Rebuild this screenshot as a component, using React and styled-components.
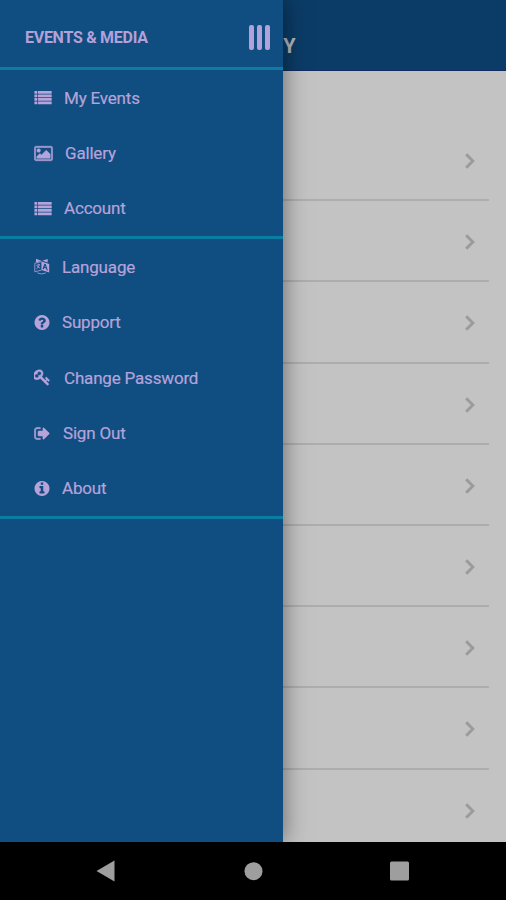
import React from "react";
import styled, { createGlobalStyle } from "styled-components";

const GlobalStyle = createGlobalStyle`
  * {
    box-sizing: border-box;
  }
  body {
    margin: 0;
    font-family: Roboto, "Liberation Sans", sans-serif;
  }
`;

const Screen = styled.div`
  display: flex;
  position: relative;
  flex-direction: column;
  width: 506px;
  height: 900px;
  overflow: hidden;
  background: #000;
`;

const Page = styled.div`
  display: flex;
  flex-direction: column;
  height: 842px;
  overflow: hidden;
  background: #c3c3c3;
`;

const PageHeader = styled.div`
  display: flex;
  flex: none;
  justify-content: center;
  align-items: flex-end;
  height: 71px;
  padding-bottom: 12px;
  background: #0b3c67;
  border-bottom: 1px solid #142c5b;
`;

const PageTitle = styled.div`
  color: #b5b8bd;
  font-size: 20px;
  font-weight: 700;
  line-height: 24px;
  letter-spacing: 0.1px;
`;

const PageList = styled.div`
  padding: 49px 17px 0 0;
`;

const PageRow = styled.div`
  display: flex;
  justify-content: flex-end;
  align-items: center;
  height: 81.2px;
  padding: 3px 13px 0 0;
  border-bottom: 2px solid #adadad;
`;

const Drawer = styled.div`
  position: absolute;
  top: 0;
  left: 0;
  width: 283px;
  height: 842px;
  background: #104d80;
  box-shadow: 0 0 22px rgba(0, 0, 0, 0.5);
  clip-path: inset(0 -40px 0 0);
`;

const DrawerHeader = styled.div`
  display: flex;
  justify-content: space-between;
  align-items: center;
  height: 70px;
  padding: 7px 13px 0 25px;
  border-bottom: 3px solid #0b7da2;
`;

const DrawerTitle = styled.div`
  color: #b3a1d8;
  font-size: 16px;
  font-weight: 700;
  letter-spacing: -0.28px;
  white-space: nowrap;
`;

const MenuButton = styled.div`
  display: flex;
  gap: 3px;
`;

const MenuBar = styled.div`
  width: 5px;
  height: 25px;
  border-radius: 2px;
  background: #b3a1da;
`;

const MenuSection = styled.div`
  border-bottom: 3px solid #0b7da2;
`;

const MenuItem = styled.div`
  display: flex;
  align-items: center;
  height: 55.4px;
  padding-left: 34px;
  color: #b5a3da;
`;

const MenuIcon = styled.svg`
  display: block;
  flex: none;
  width: ${(props) => props.$width}px;
  height: ${(props) => props.$height || 17}px;
  fill: currentColor;
`;

const MenuText = styled.div`
  margin-left: ${(props) => props.$gap}px;
  font-size: 17px;
  line-height: 20px;
  letter-spacing: -0.18px;
  white-space: nowrap;
  -webkit-text-stroke: 0.2px currentColor;
`;

const NavBar = styled.div`
  display: flex;
  justify-content: space-between;
  align-items: center;
  height: 58px;
  padding: 0 96px;
`;

const CIRCLE =
  "M1664 896q0 209-103 385.5t-279.5 279.5-385.5 103-385.5-103-279.5-279.5-103-385.5 103-385.5 279.5-279.5 385.5-103 385.5 103 279.5 279.5 103 385.5z";

const icons = {
  list: {
    width: 18,
    box: "0 0 18 17",
    shape: [1.9, 5.4, 8.9, 12.4].map((y) => (
      <g key={y}>
        <rect x="0.4" y={y} width="2.9" height="2.9" rx="0.4" />
        <rect x="4" y={y} width="13.7" height="2.9" rx="0.4" />
      </g>
    ))
  },
  picture: {
    width: 19,
    box: "0 0 1920 1792",
    shape: (
      <path
        stroke="currentColor"
        strokeWidth="50"
        d="M640 576q0 80-56 136t-136 56-136-56-56-136 56-136 136-56 136 56 56 136zm1024 384v448h-1408v-192l320-320 160 160 512-512zm96-704h-1600q-13 0-22.5 9.5t-9.5 22.5v1216q0 13 9.5 22.5t22.5 9.5h1600q13 0 22.5-9.5t9.5-22.5v-1216q0-13-9.5-22.5t-22.5-9.5zm160 32v1216q0 66-47 113t-113 47h-1600q-66 0-113-47t-47-113v-1216q0-66 47-113t113-47h1600q66 0 113 47t47 113z"
      />
    )
  },
  language: {
    width: 16,
    box: "0 0 16 17",
    shape: (
      <>
        <path
          fillRule="evenodd"
          d="M7.4 3.6 15.2 6V14.6L7.4 12.1zM10.4 5.7 8.5 10.9l1.3.4.5-1.3 1.9.6.4 1.6 1.3.4-2.1-6.4zm.6 1.9.7 1.9-1.2-.4z"
        />
        <path d="M2.1.8 7.7 3.1 1.8 4.6zM8.2 2.8 13.7 1v3.4z" />
        <path
          d="M7.4 3.6.8 5.3V13.8L7.4 12.1M2.4 7.4 6 6.5M4.1 5.7v1.1M5.4 6.8Q4.8 9.3 2.4 11M3.2 8Q4 9.6 6.1 10.1M3.3 14.9Q7.5 17 11.8 14.9"
          fill="none"
          stroke="currentColor"
          strokeWidth="0.8"
        />
      </>
    )
  },
  question: {
    width: 16,
    height: 15,
    box: "128 128 1536 1536",
    shape: (
      <path
        fillRule="evenodd"
        d={
          "M1024 1376v-192q0-14-9-23t-23-9h-192q-14 0-23 9t-9 23v192q0 14 9 23t23 9h192q14 0 23-9t9-23zm256-672q0-88-55.5-163t-138.5-116-170-41q-243 0-371 213-15 24 8 42l132 100q7 6 19 6 16 0 25-12 53-68 86-92 34-24 86-24 48 0 85.5 26t37.5 59q0 38-20 61t-68 45q-63 28-115.5 86.5t-52.5 125.5v36q0 14 9 23t23 9h192q14 0 23-9t9-23q0-19 21.5-49.5t54.5-49.5q32-18 49-28.5t46-35 44.5-48 28-60.5 12.5-81z" +
          CIRCLE
        }
      />
    )
  },
  key: {
    width: 17,
    box: "128 64 1664 1728",
    shape: (
      <path
        stroke="currentColor"
        strokeWidth="40"
        d="M832 512q0-80-56-136t-136-56-136 56-56 136q0 42 19 83-41-19-83-19-80 0-136 56t-56 136 56 136 136 56 136-56 56-136q0-42-19-83 41 19 83 19 80 0 136-56t56-136zm851 704q0 17-49 66t-66 49q-9 0-28.5-16t-36.5-33-38.5-40-24.5-26l-96 96 220 220q28 28 28 68 0 42-39 81t-81 39q-40 0-68-28l-671-671q-176 131-365 131-163 0-265.5-102.5t-102.5-265.5q0-160 95-313t248-248 313-95q163 0 265.5 102.5t102.5 265.5q0 189-131 365l355 355 96-96q-3-3-26-24.5t-40-38.5-33-36.5-16-28.5q0-17 49-66t66-49q13 0 23 10 6 6 46 44.5t82 79.5 86.5 86 73 78 28.5 41z"
      />
    )
  },
  signOut: {
    width: 16,
    box: "64 0 1600 1792",
    shape: (
      <path
        stroke="currentColor"
        strokeWidth="60"
        d="M704 1440q0 4 1 20t.5 26.5-3 23.5-10 19.5-20.5 6.5h-320q-119 0-203.5-84.5t-84.5-203.5v-704q0-119 84.5-203.5t203.5-84.5h320q13 0 22.5 9.5t9.5 22.5q0 4 1 20t.5 26.5-3 23.5-10 19.5-20.5 6.5h-320q-66 0-113 47t-47 113v704q0 66 47 113t113 47h312l11.5 1 11.5 3 8 5.5 7 9 2 13.5zm928-544q0 26-19 45l-544 544q-19 19-45 19t-45-19-19-45v-288h-448q-26 0-45-19t-19-45v-384q0-26 19-45t45-19h448v-288q0-26 19-45t45-19 45 19l544 544q19 19 19 45z"
      />
    )
  },
  info: {
    width: 16,
    height: 15,
    box: "128 128 1536 1536",
    shape: (
      <path
        fillRule="evenodd"
        d={
          "M1152 1376v-160q0-14-9-23t-23-9h-96v-512q0-14-9-23t-23-9h-320q-14 0-23 9t-9 23v160q0 14 9 23t23 9h96v320h-96q-14 0-23 9t-9 23v160q0 14 9 23t23 9h448q14 0 23-9t9-23zm-128-896v-160q0-14-9-23t-23-9h-192q-14 0-23 9t-9 23v160q0 14 9 23t23 9h192q14 0 23-9t9-23z" +
          CIRCLE
        }
      />
    )
  }
};

const sections = [
  [
    { icon: "list", text: "My Events", gap: 12 },
    { icon: "picture", text: "Gallery", gap: 12 },
    { icon: "list", text: "Account", gap: 12 }
  ],
  [
    { icon: "language", text: "Language", gap: 12 },
    { icon: "question", text: "Support", gap: 12 },
    { icon: "key", text: "Change Password", gap: 13 },
    { icon: "signOut", text: "Sign Out", gap: 13 },
    { icon: "info", text: "About", gap: 12 }
  ]
];

const rows = [1, 2, 3, 4, 5, 6, 7, 8, 9];

const Item = ({ icon, text, gap }) => {
  const { width, height, box, shape } = icons[icon];
  return (
    <MenuItem>
      <MenuIcon $width={width} $height={height} viewBox={box}>
        {shape}
      </MenuIcon>
      <MenuText $gap={gap}>{text}</MenuText>
    </MenuItem>
  );
};

const Chevron = () => (
  <svg width="12" height="18" viewBox="0 0 12 18">
    <path
      d="M2.2 2.2 8.8 9 2.2 15.8"
      fill="none"
      stroke="#9b9b9b"
      strokeWidth="3"
    />
  </svg>
);

const App = () => {
  return (
    <Screen>
      <GlobalStyle />
      <Page>
        <PageHeader>
          <PageTitle>GALLERY</PageTitle>
        </PageHeader>
        <PageList>
          {rows.map((row) => (
            <PageRow key={row}>
              <Chevron />
            </PageRow>
          ))}
        </PageList>
      </Page>
      <Drawer>
        <DrawerHeader>
          <DrawerTitle>EVENTS &amp; MEDIA</DrawerTitle>
          <MenuButton>
            <MenuBar />
            <MenuBar />
            <MenuBar />
          </MenuButton>
        </DrawerHeader>
        {sections.map((items, i) => (
          <MenuSection key={i}>
            {items.map((item) => (
              <Item key={item.text} {...item} />
            ))}
          </MenuSection>
        ))}
      </Drawer>
      <NavBar>
        <svg width="19" height="22" viewBox="0 0 19 22">
          <path d="M.5 11 18.5.5v21z" fill="#9e9e9e" />
        </svg>
        <svg width="21" height="19" viewBox="0 0 21 19">
          <circle cx="11.5" cy="9.2" r="9" fill="#9e9e9e" />
        </svg>
        <svg width="20" height="20" viewBox="0 0 20 20">
          <rect x="0" y=".5" width="19" height="19" rx="1.5" fill="#9e9e9e" />
        </svg>
      </NavBar>
    </Screen>
  );
};

export default App;
